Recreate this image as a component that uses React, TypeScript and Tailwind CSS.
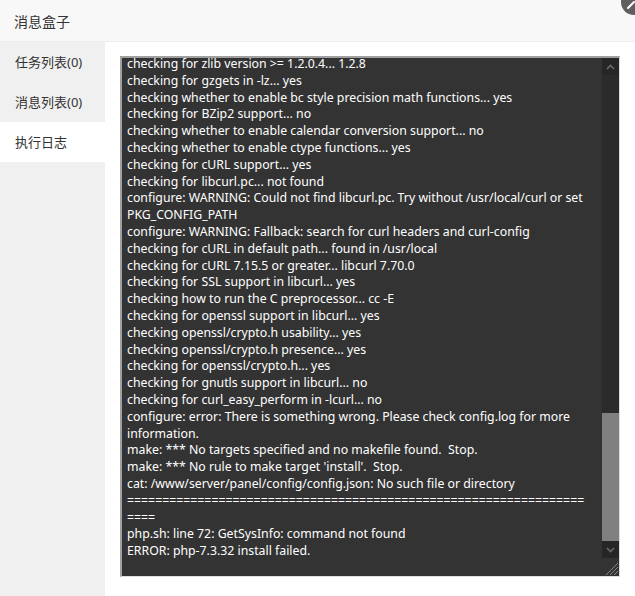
import React from 'react';

/**
 * Lines of the install log, one entry per visual line
 */
const logLines = [
  'checking for zlib version >= 1.2.0.4... 1.2.8',
  'checking for gzgets in -lz... yes',
  'checking whether to enable bc style precision math functions... yes',
  'checking for BZip2 support... no',
  'checking whether to enable calendar conversion support... no',
  'checking whether to enable ctype functions... yes',
  'checking for cURL support... yes',
  'checking for libcurl.pc... not found',
  'configure: WARNING: Could not find libcurl.pc. Try without /usr/local/curl or set',
  'PKG_CONFIG_PATH',
  'configure: WARNING: Fallback: search for curl headers and curl-config',
  'checking for cURL in default path... found in /usr/local',
  'checking for cURL 7.15.5 or greater... libcurl 7.70.0',
  'checking for SSL support in libcurl... yes',
  'checking how to run the C preprocessor... cc -E',
  'checking for openssl support in libcurl... yes',
  'checking openssl/crypto.h usability... yes',
  'checking openssl/crypto.h presence... yes',
  'checking for openssl/crypto.h... yes',
  'checking for gnutls support in libcurl... no',
  'checking for curl_easy_perform in -lcurl... no',
  'configure: error: There is something wrong. Please check config.log for more',
  'information.',
  "make: *** No targets specified and no makefile found.  Stop.",
  "make: *** No rule to make target 'install'.  Stop.",
  'cat: /www/server/panel/config/config.json: No such file or directory',
  '=================================================================',
  '====',
  'php.sh: line 72: GetSysInfo: command not found',
  'ERROR: php-7.3.32 install failed.',
];

const tabs = [
  { label: '任务列表(0)', active: false },
  { label: '消息列表(0)', active: false },
  { label: '执行日志', active: true },
];

const font = 'font-["Noto_Sans","Noto_Sans_CJK_SC",sans-serif]';

export default function App() {
  return (
    <div className={`relative h-[596px] w-[635px] overflow-hidden bg-white ${font}`}>
      {/* Header */}
      <div className="flex h-[42px] items-center border-b border-[#eeeeee] bg-[#f8f8f8] px-[14px] pt-[1px] text-[14px] text-[#333]">
        消息盒子
      </div>

      {/* Close button */}
      <div className="absolute left-[621px] top-[-11px] flex h-[26px] w-[26px] items-center justify-center rounded-full bg-[#5f5f5f]">
        <svg width="26" height="26" viewBox="0 0 26 26" className="absolute left-0 top-0">
          <path d="M7 19 L13 13" stroke="#fff" strokeWidth="2" strokeLinecap="round" />
        </svg>
      </div>

      <div className="flex h-[554px]">
        {/* Sidebar */}
        <nav className="flex w-[105px] shrink-0 flex-col bg-[#f0f0f0]">
          {tabs.map((t) => (
            <div
              key={t.label}
              className={`flex h-[40px] items-center px-[15px] pt-[2px] text-[13px] text-[#333] ${t.active ? 'bg-white' : ''}`}
            >
              {t.label}
            </div>
          ))}
        </nav>

        {/* Log panel */}
        <div className="flex-1 pl-[15px] pr-[15px] pt-[14px]">
          <div className="flex h-[521px] w-[500px] border border-l-2 border-t-2 border-[#a0a0a0] border-b-[#e0e0e0] border-r-[#dcdcdc] bg-[#333333]">
            <div className="flex-1 overflow-hidden pl-[5px] pr-[4px]">
              <div className="mt-[-2px] text-[12.3px] leading-[16.8px] text-white">
                {logLines.map((l, i) => (
                  <div key={i} className="whitespace-pre">
                    {l}
                  </div>
                ))}
              </div>
            </div>

            {/* Scrollbar */}
            <div className="flex w-[17px] shrink-0 flex-col bg-[#2b2b2b]">
              <div className="flex h-[17px] items-center justify-center bg-[#262626]">
                <svg width="9" height="6" viewBox="0 0 9 6">
                  <path d="M1 5 L4.5 1.5 L8 5" fill="none" stroke="#6a6a6a" strokeWidth="1.6" />
                </svg>
              </div>
              <div className="h-[338px]" />
              <div className="h-[128px] bg-[#808080]" />
              <div className="flex h-[17px] items-center justify-center bg-[#262626]">
                <svg width="9" height="6" viewBox="0 0 9 6">
                  <path d="M1 1 L4.5 4.5 L8 1" fill="none" stroke="#6a6a6a" strokeWidth="1.6" />
                </svg>
              </div>
              <div className="relative flex-1 bg-[#333333]">
                <svg width="17" height="17" viewBox="0 0 17 17" className="absolute bottom-0 right-0">
                  <path d="M16 4 L4 16 M16 8 L8 16 M16 12 L12 16" stroke="#8a8a8a" strokeWidth="1" />
                </svg>
              </div>
            </div>
          </div>
        </div>
      </div>
    </div>
  );
}
